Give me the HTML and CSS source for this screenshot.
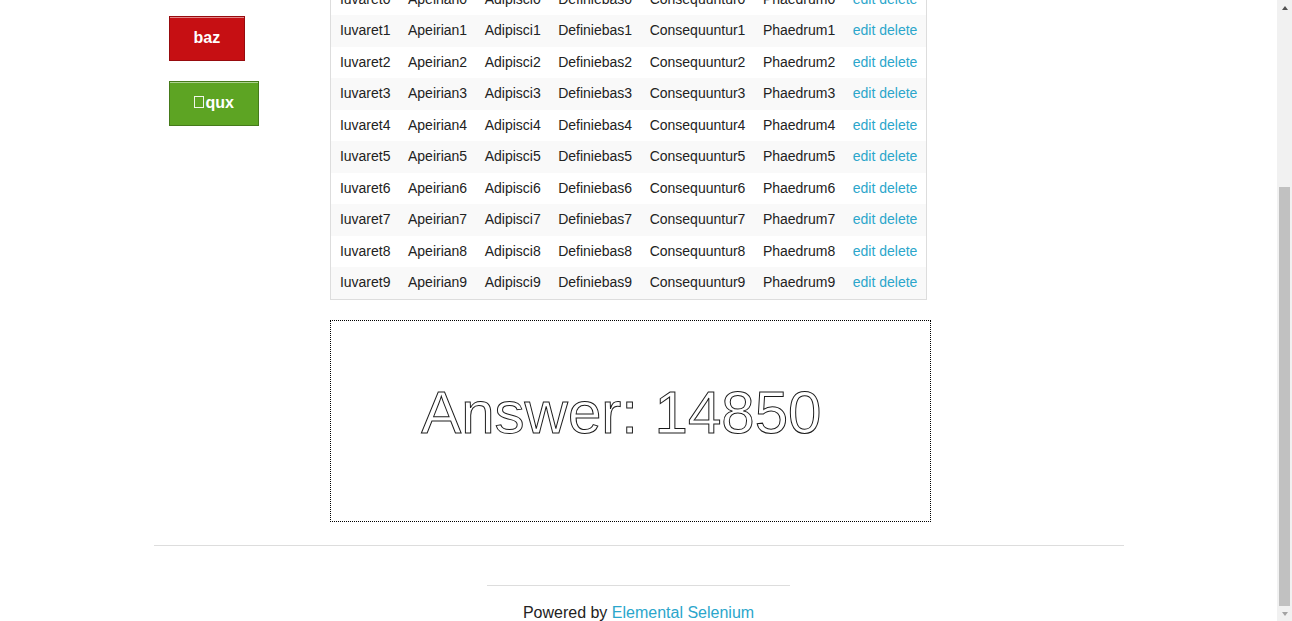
FILE: index.html
```html
<!DOCTYPE html>
<html lang="en">
<head>
<meta charset="utf-8">
<title>The Internet</title>
<link rel="stylesheet" href="styles.css">
</head>
<body>
<div class="row">
  <div class="content">
    <div class="example">
      <h3 class="title">Challenging DOM</h3>
      <p class="intro">The hardest part in automated web testing is finding the best locators (e.g., ones that well named, unique, and unlikely to change). It's more often than not that the application you're testing was not built with this concept in mind. This example demonstrates that with unique IDs, a table with no helpful locators, and a canvas element.</p>
      <hr class="rule">
      <div class="example-row">
        <div class="col-side">
          <a href="#" class="button">bar</a>
          <a href="#" class="button alert">baz</a>
          <a href="#" class="button success"><span class="tofu"></span>qux</a>
        </div>
        <div class="col-main">
          <table class="grid">
            <thead>
              <tr><th>Lorem</th><th>Ipsum</th><th>Dolor</th><th>Sit</th><th>Amet</th><th>Diceret</th><th>Action</th></tr>
            </thead>
            <tbody>
              <tr><td>Iuvaret0</td><td>Apeirian0</td><td>Adipisci0</td><td>Definiebas0</td><td>Consequuntur0</td><td>Phaedrum0</td><td><a href="#">edit</a> <a href="#">delete</a></td></tr>
              <tr><td>Iuvaret1</td><td>Apeirian1</td><td>Adipisci1</td><td>Definiebas1</td><td>Consequuntur1</td><td>Phaedrum1</td><td><a href="#">edit</a> <a href="#">delete</a></td></tr>
              <tr><td>Iuvaret2</td><td>Apeirian2</td><td>Adipisci2</td><td>Definiebas2</td><td>Consequuntur2</td><td>Phaedrum2</td><td><a href="#">edit</a> <a href="#">delete</a></td></tr>
              <tr><td>Iuvaret3</td><td>Apeirian3</td><td>Adipisci3</td><td>Definiebas3</td><td>Consequuntur3</td><td>Phaedrum3</td><td><a href="#">edit</a> <a href="#">delete</a></td></tr>
              <tr><td>Iuvaret4</td><td>Apeirian4</td><td>Adipisci4</td><td>Definiebas4</td><td>Consequuntur4</td><td>Phaedrum4</td><td><a href="#">edit</a> <a href="#">delete</a></td></tr>
              <tr><td>Iuvaret5</td><td>Apeirian5</td><td>Adipisci5</td><td>Definiebas5</td><td>Consequuntur5</td><td>Phaedrum5</td><td><a href="#">edit</a> <a href="#">delete</a></td></tr>
              <tr><td>Iuvaret6</td><td>Apeirian6</td><td>Adipisci6</td><td>Definiebas6</td><td>Consequuntur6</td><td>Phaedrum6</td><td><a href="#">edit</a> <a href="#">delete</a></td></tr>
              <tr><td>Iuvaret7</td><td>Apeirian7</td><td>Adipisci7</td><td>Definiebas7</td><td>Consequuntur7</td><td>Phaedrum7</td><td><a href="#">edit</a> <a href="#">delete</a></td></tr>
              <tr><td>Iuvaret8</td><td>Apeirian8</td><td>Adipisci8</td><td>Definiebas8</td><td>Consequuntur8</td><td>Phaedrum8</td><td><a href="#">edit</a> <a href="#">delete</a></td></tr>
              <tr><td>Iuvaret9</td><td>Apeirian9</td><td>Adipisci9</td><td>Definiebas9</td><td>Consequuntur9</td><td>Phaedrum9</td><td><a href="#">edit</a> <a href="#">delete</a></td></tr>
            </tbody>
          </table>
          <div class="canvas-box"><span class="answer">Answer: 14850</span></div>
        </div>
      </div>
    </div>
    <hr class="rule">
  </div>
</div>
<div class="footer">
  <div class="footer-col">
    <hr class="rule">
    <div class="powered">Powered by <a href="#">Elemental Selenium</a></div>
  </div>
</div>
<div class="scrollbar" aria-hidden="true">
  <div class="sb-btn sb-up"></div>
  <div class="sb-track"><div class="sb-thumb"></div></div>
  <div class="sb-btn sb-down"></div>
</div>
<script src="script.js"></script>
</body>
</html>
```

FILE: styles.css
```css
* { box-sizing: border-box; }
html, body { margin: 0; padding: 0; }
body {
  margin-right: 15px;
  font-family: "Liberation Sans", Arial, sans-serif;
  font-size: 16px;
  line-height: 1;
  color: #222;
  background: #fff;
}
a { color: #2ba6cb; text-decoration: none; }

.row { max-width: 1000px; margin: 0 auto; }
.content { padding: 20px 15px 0; }
.title {
  font-size: 27px;
  line-height: 32px;
  font-weight: normal;
  margin: 0 0 14px;
}
.intro { line-height: 25.6px; margin: 0; }
.rule {
  border: 0;
  border-top: 1px solid #ddd;
  height: 0;
  margin: 20px 0 19px;
}

.example-row { display: flex; }
.col-side {
  width: 16.6667%;
  padding: 4px 15px 0;
  display: flex;
  flex-direction: column;
  align-items: flex-start;
  gap: 20px;
}
.button {
  display: block;
  padding: 12px 24px 13px;
  line-height: 18px;
  font-weight: bold;
  color: #fff;
  background: #2ba6cb;
  border: 1px solid #2284a1;
  box-shadow: inset 0 1px 0 rgba(255, 255, 255, 0.5);
}
.button.alert { background: #c60f13; border-color: #970b0e; }
.button.success { background: #5da423; border-color: #457a1a; }
.tofu {
  display: inline-block;
  width: 10px;
  height: 12px;
  border: 1px solid #f0f6ea;
  margin-right: 2px;
}

.col-main { width: 83.3333%; padding: 0 15px; }
.grid {
  border-collapse: separate;
  border-spacing: 0;
  border: 1px solid #ddd;
  background: #fff;
  margin-bottom: 20px;
  font-size: 14px;
}
.grid th {
  text-align: left;
  font-weight: bold;
  background: #f5f5f5;
  line-height: 18px;
  padding: 8px 8.75px 10px;
}
.grid td {
  text-align: left;
  line-height: 15.75px;
  padding: 7.875px 8.75px;
}
.grid tbody tr:nth-child(even) { background: #f9f9f9; }

.canvas-box {
  width: 601px;
  height: 202px;
  border: 1px dotted #000;
  margin-bottom: 3px;
  padding: 62px 0 0 90px;
}
.answer {
  display: block;
  font-size: 60px;
  line-height: 60px;
  color: transparent;
  -webkit-text-stroke: 1px #1a1a1a;
  white-space: nowrap;
}

.footer { max-width: 1000px; margin: 0 auto; display: flow-root; }
.footer-col { width: 33.3333%; margin: 0 auto; padding: 0 15px; }
.powered { text-align: center; line-height: 16px; }

/* browser scrollbar drawn over the page edge */
.scrollbar {
  position: fixed;
  top: 0;
  right: 0;
  width: 15px;
  height: 100vh;
  background: #f1f1f1;
  display: flex;
  flex-direction: column;
}
.sb-btn {
  height: 15px;
  flex: none;
  display: flex;
  align-items: center;
  justify-content: center;
}
.sb-up::before {
  content: "";
  border-left: 3.5px solid transparent;
  border-right: 3.5px solid transparent;
  border-bottom: 4px solid #505050;
}
.sb-down::before {
  content: "";
  border-left: 3.5px solid transparent;
  border-right: 3.5px solid transparent;
  border-top: 4px solid #a3a3a3;
}
.sb-track {
  flex: 1;
  display: flex;
  flex-direction: column;
  justify-content: flex-end;
  padding: 0 2px;
}
.sb-thumb { height: 419px; background: #c1c1c1; }
```

FILE: script.js
```js
window.scrollTo(0, document.documentElement.scrollHeight);
window.addEventListener('load', function () {
  window.scrollTo(0, document.documentElement.scrollHeight);
});
```
